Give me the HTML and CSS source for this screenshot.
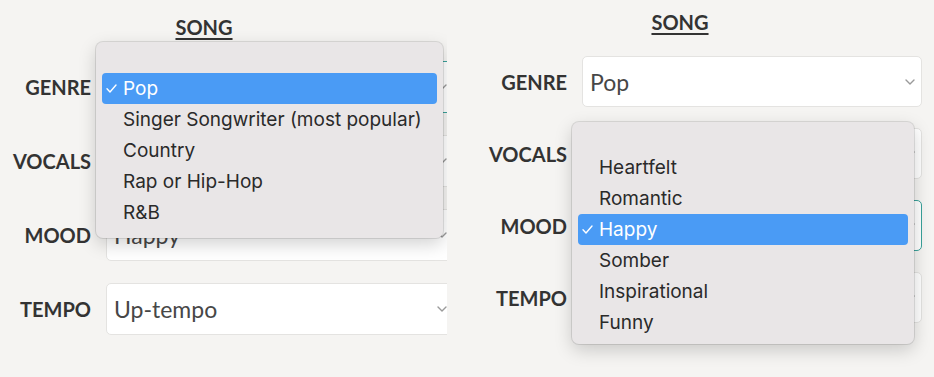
FILE: index.html
```html
<!DOCTYPE html>
<html lang="en">
  <head>
    <meta charset="UTF-8" />
    <meta name="viewport" content="width=device-width, initial-scale=1.0" />
    <title>Song options</title>
    <link rel="stylesheet" href="styles.css">
  </head>
  <body>
    <div class="board">
      <!-- Left capture: genre menu open -->
      <section class="shot shot--genre">
        <h2 class="song-title">SONG</h2>

        <div class="field">
          <span class="field-label">GENRE</span>
          <div class="field-select is-focused">
            <span>Pop</span>
            <svg class="chevron" viewBox="0 0 10 6"><path d="M1 1l4 4 4-4" /></svg>
          </div>
        </div>

        <div class="field">
          <span class="field-label">VOCALS</span>
          <div class="field-select">
            <span>Female</span>
            <svg class="chevron" viewBox="0 0 10 6"><path d="M1 1l4 4 4-4" /></svg>
          </div>
        </div>

        <div class="field">
          <span class="field-label">MOOD</span>
          <div class="field-select">
            <span>Happy</span>
            <svg class="chevron" viewBox="0 0 10 6"><path d="M1 1l4 4 4-4" /></svg>
          </div>
        </div>

        <div class="field">
          <span class="field-label">TEMPO</span>
          <div class="field-select">
            <span>Up-tempo</span>
            <svg class="chevron" viewBox="0 0 10 6"><path d="M1 1l4 4 4-4" /></svg>
          </div>
        </div>

        <div class="menu menu--genre">
          <div class="menu-item is-selected">
            <span class="tick"><svg viewBox="0 0 11 9"><path d="M1 4.8l3 3.2 6-7" /></svg></span>Pop
          </div>
          <div class="menu-item"><span class="tick"></span>Singer Songwriter (most popular)</div>
          <div class="menu-item"><span class="tick"></span>Country</div>
          <div class="menu-item"><span class="tick"></span>Rap or Hip-Hop</div>
          <div class="menu-item"><span class="tick"></span>R&amp;B</div>
        </div>
      </section>

      <!-- Right capture: mood menu open -->
      <section class="shot shot--mood">
        <h2 class="song-title">SONG</h2>

        <div class="field">
          <span class="field-label">GENRE</span>
          <div class="field-select">
            <span>Pop</span>
            <svg class="chevron" viewBox="0 0 10 6"><path d="M1 1l4 4 4-4" /></svg>
          </div>
        </div>

        <div class="field">
          <span class="field-label">VOCALS</span>
          <div class="field-select">
            <span>Female</span>
            <svg class="chevron" viewBox="0 0 10 6"><path d="M1 1l4 4 4-4" /></svg>
          </div>
        </div>

        <div class="field">
          <span class="field-label">MOOD</span>
          <div class="field-select is-focused">
            <span>Happy</span>
            <svg class="chevron" viewBox="0 0 10 6"><path d="M1 1l4 4 4-4" /></svg>
          </div>
        </div>

        <div class="field">
          <span class="field-label">TEMPO</span>
          <div class="field-select">
            <span>Up-tempo</span>
            <svg class="chevron" viewBox="0 0 10 6"><path d="M1 1l4 4 4-4" /></svg>
          </div>
        </div>

        <div class="menu menu--mood">
          <div class="menu-item"><span class="tick"></span>Heartfelt</div>
          <div class="menu-item"><span class="tick"></span>Romantic</div>
          <div class="menu-item is-selected">
            <span class="tick"><svg viewBox="0 0 11 9"><path d="M1 4.8l3 3.2 6-7" /></svg></span>Happy
          </div>
          <div class="menu-item"><span class="tick"></span>Somber</div>
          <div class="menu-item"><span class="tick"></span>Inspirational</div>
          <div class="menu-item"><span class="tick"></span>Funny</div>
        </div>
      </section>
    </div>
  </body>
</html>
```

FILE: styles.css
```css
* {
  box-sizing: border-box;
  margin: 0;
  padding: 0;
}

html,
body {
  height: 100%;
  overflow: hidden;
}

body {
  font-family: "Lato", "Open Sans", sans-serif;
  background-color: #f5f4f2;
  color: #333333;
}

.board {
  display: flex;
  height: 377px;
}

/* Each capture of the form */
.shot {
  position: relative; /* anchor for the open menu */
  flex: none;
  overflow: hidden;
  padding-left: 11px;
}

.shot--genre {
  width: 447px;
  padding-top: 15px;
}

.shot--mood {
  width: 458px;
  margin-left: 29px;
  padding-top: 10px;
}

.song-title {
  width: 386px;
  margin-bottom: 22px;
  font-size: 20px;
  line-height: 24px;
  font-weight: 700;
  text-align: center;
  color: #333333;
  text-decoration: underline;
  text-decoration-thickness: 2px;
  text-underline-offset: 3px;
}

.field {
  display: flex;
  align-items: center;
  gap: 15px;
  margin-bottom: 21px;
}
.shot--genre .field {
  margin-bottom: 22px;
}

.field-label {
  flex: none;
  width: 80px;
  text-align: right;
  font-size: 20px;
  font-weight: 700;
  color: #333333;
}

.field-select {
  flex: none;
  display: flex;
  align-items: center;
  justify-content: space-between;
  width: 340px;
  height: 51px;
  padding: 0 6px 0 7px;
  background-color: #ffffff;
  border: 1px solid #e4e3e1;
  border-radius: 5px;
  font-size: 23px;
  color: #474747;
}
.shot--genre .field-select {
  width: 348px;
  height: 52px;
}
.field-select.is-focused {
  border-color: #3aa29b;
}

.chevron {
  width: 10px;
  height: 6px;
  fill: none;
  stroke: #9a9a9a;
  stroke-width: 1.4;
  stroke-linecap: round;
  stroke-linejoin: round;
}

/* --- Open native-style dropdown --- */
.menu {
  position: absolute;
  left: 96px;
  padding: 30px 6px 6px;
  background-color: #e9e6e7;
  border-radius: 7px;
  box-shadow: 0 0 0 1px rgba(0, 0, 0, 0.1), 0 6px 18px rgba(0, 0, 0, 0.18);
  font-family: "Inter", "Liberation Sans", sans-serif;
  font-size: 19px;
  color: #2a2a2a;
}
.menu--genre {
  top: 42px;
  width: 347px;
  padding-top: 31px;
  padding-bottom: 10px;
}
.menu--mood {
  top: 122px;
  width: 342px;
}

.menu-item {
  display: flex;
  align-items: center;
  height: 31px;
  padding-left: 4px;
  border-radius: 4px;
  white-space: nowrap;
}
.menu-item.is-selected {
  background-color: #4a9bf5;
  color: #ffffff;
}

.tick {
  flex: none;
  display: flex;
  align-items: center;
  width: 17px;
}
.tick svg {
  width: 11px;
  height: 9px;
  fill: none;
  stroke: #ffffff;
  stroke-width: 1.4;
  stroke-linecap: round;
  stroke-linejoin: round;
}
```
